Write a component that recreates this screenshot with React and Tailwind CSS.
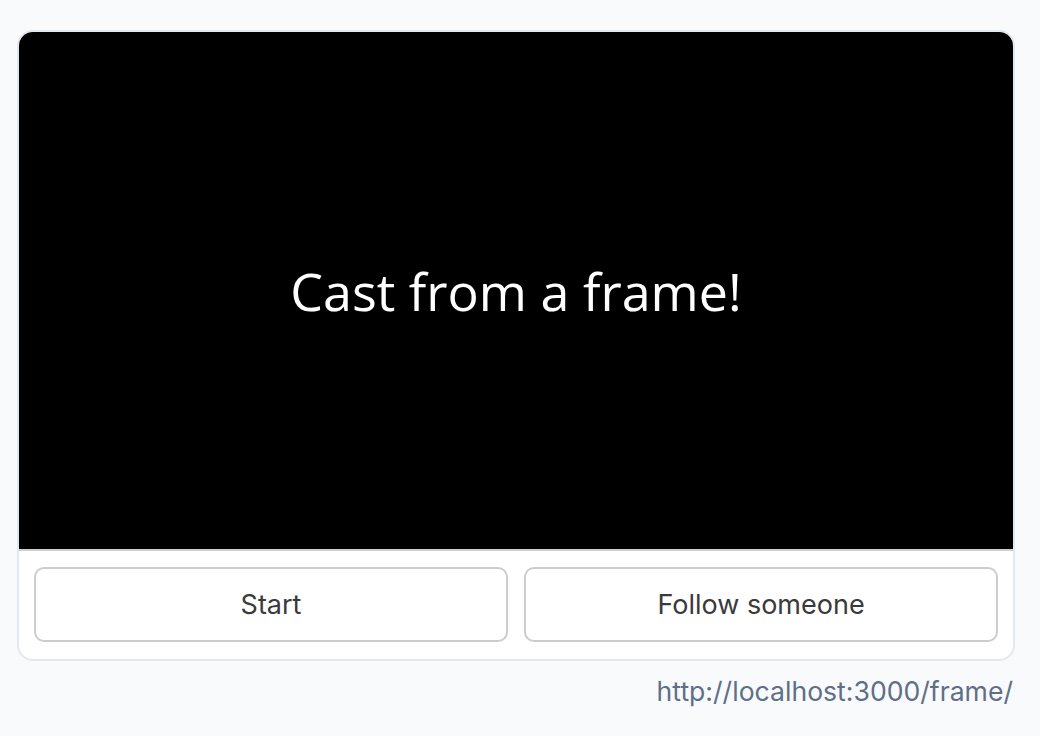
import React from "react";

const App = () => {
  return (
    <div className="min-h-screen w-full bg-[#f8fafc] pl-[17px] pt-[30px]" style={{ fontFamily: "Inter, 'Liberation Sans', sans-serif" }}>
      <div className="w-[998px]">
        <div className="rounded-[16px] border-2 border-[#e2e8f0] bg-white">
          <div className="flex h-[519px] items-center justify-center rounded-t-[14px] border-b-2 border-[#cfcfcf] bg-black">
            <h1
              className="text-[52px] leading-none text-white"
              style={{ fontFamily: "'Open Sans', 'Noto Sans', sans-serif" }}
            >
              Cast from a frame!
            </h1>
          </div>
          <div className="flex gap-4 px-[15px] pt-4 pb-[17px]">
            <button className="h-[75px] flex-1 rounded-[10px] border-2 border-[#cccccc] bg-white pt-[2px] text-[27px] text-[#3a3a3a]">
              Start
            </button>
            <button className="h-[75px] flex-1 rounded-[10px] border-2 border-[#cccccc] bg-white pt-[2px] text-[27px] text-[#3a3a3a]">
              Follow someone
            </button>
          </div>
        </div>
        <div className="mt-[13px] pr-[2px] text-right text-[26.6px] leading-[34px] text-[#5f6f88]">
          http://localhost:3000/frame/
        </div>
      </div>
    </div>
  );
};

export default App;
